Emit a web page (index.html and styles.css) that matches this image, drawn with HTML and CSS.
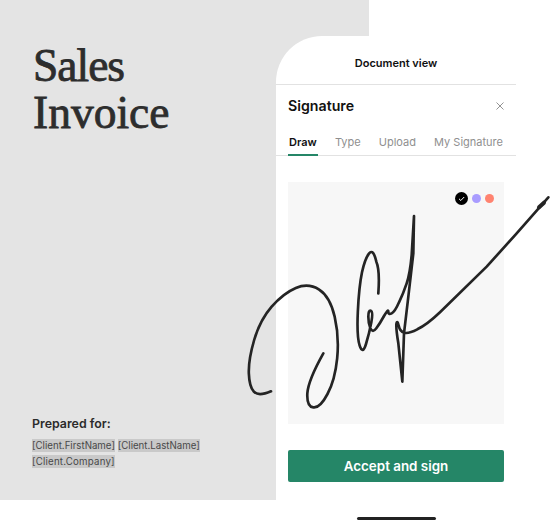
FILE: index.html
```html
<!DOCTYPE html>
<html lang="en">
<head>
<meta charset="utf-8">
<title>Sales Invoice</title>
<link rel="stylesheet" href="styles.css">
</head>
<body>
<main class="stage">
  <section class="sheet">
    <h1 class="title"><span class="title-first">Sales</span><br>Invoice</h1>
    <div class="prepared">
      <h2 class="prepared-label">Prepared for:</h2>
      <p class="tokens"><span class="token">[Client.FirstName]</span> <span class="token">[Client.LastName]</span><br><span class="token token-wide">[Client.Company]</span></p>
    </div>
  </section>

  <section class="phone">
    <header class="phone-head">Document view</header>
    <div class="sig-head">
      <h2 class="sig-title">Signature</h2>
      <svg class="close" viewBox="0 0 8 8" aria-hidden="true"><path d="M.5.5l7 7M7.5.5l-7 7"/></svg>
    </div>
    <nav class="tabs">
      <span class="tab tab-active">Draw</span>
      <span class="tab">Type</span>
      <span class="tab">Upload</span>
      <span class="tab">My Signature</span>
    </nav>
    <div class="canvas">
      <div class="swatches">
        <span class="swatch swatch-black">
          <svg viewBox="0 0 13 13" aria-hidden="true"><path d="M4 6.8l1.8 1.7L9.2 5"/></svg>
        </span>
        <span class="swatch swatch-purple"></span>
        <span class="swatch swatch-coral"></span>
      </div>
    </div>
    <button class="accept">Accept and sign</button>
    <div class="home-bar"></div>
  </section>

  <svg class="signature" viewBox="0 0 930 690" aria-hidden="true">
    <path d="M93 604 Q55 620 41.5 605 Q28 590 26.5 550 Q25 510 42.5 450 Q60 390 95 350 Q130 310 167.5 294 Q205 278 237.5 299 Q270 320 284 380 Q298 440 291.5 505 Q285 570 262.5 612 Q240 655 220 652 Q200 650 202 610 Q205 570 250 490"/>
    <path d="M415 310 Q420 240 409 215 Q400 175 387.5 190 Q375 205 366 247 Q357 290 353.5 365 Q350 440 359 467 Q368 495 378 462 Q388 430 394 397 Q400 365 392.5 362 Q385 360 385 380 Q385 400 391 415 Q398 430 409 415 Q420 400 432 378 Q445 355 445 365 Q445 375 455 370 Q465 365 477 337 Q490 310 500 280 Q510 250 515 195 L522 78 L520 190 L505 320 L492 430 L487 575 L475 460 Q467 410 469.5 400 Q472 390 476 407 Q480 425 492 428 Q505 432 532 418 Q560 405 600 367 L740 230 L830 130 L925 22"/>
    <path class="tip" d="M897 52 L912 38"/>
  </svg>
</main>
</body>
</html>
```
FILE: styles.css
```css
* { box-sizing: border-box; }
html, body { margin: 0; padding: 0; background: #fff; }
.stage {
  position: relative;
  width: 550px;
  height: 532px;
  overflow: hidden;
  background: #fff;
  font-family: Inter, "Liberation Sans", sans-serif;
}
.sheet {
  width: 369px;
  height: 500px;
  padding: 42px 33px 30px 33px;
  background: #e4e4e4;
  display: flex;
  flex-direction: column;
  justify-content: space-between;
}
.title {
  margin: 0;
  font-family: "Liberation Serif", serif;
  font-size: 45.5px;
  line-height: 47px;
  font-weight: 400;
  color: #2d2d2d;
  -webkit-text-stroke: .8px #2d2d2d;
}
.title-first { letter-spacing: -1px; }
.prepared { width: 210px; margin-left: -1px; }
.prepared-label {
  margin: 0 0 6px;
  font-size: 12.4px;
  line-height: 16px;
  font-weight: 600;
  color: #2b2b2b;
}
.tokens {
  margin: 0;
  font-size: 9.7px;
  line-height: 16px;
  color: #484848;
}
.token { background: #c9c9c9; padding: 1px 0; }
.token-wide { letter-spacing: .2px; }

.phone {
  position: absolute;
  left: 276px;
  top: 36px;
  width: 240px;
  height: 496px;
  background: #fff;
  border-top-left-radius: 46px;
  display: flex;
  flex-direction: column;
}
.phone-head {
  height: 49px;
  padding-top: 21px;
  text-align: center;
  font-size: 11px;
  line-height: 13px;
  font-weight: 600;
  color: #111;
  border-bottom: 1px solid #e2e2e2;
}
.sig-head {
  height: 42px;
  padding: 0 12px;
  display: flex;
  align-items: center;
  justify-content: space-between;
}
.sig-title {
  margin: 0;
  font-size: 14.2px;
  line-height: 16px;
  font-weight: 600;
  color: #111;
}
.close { width: 8px; height: 8px; fill: none; stroke: #777; stroke-width: .8; }
.tabs {
  height: 29px;
  padding: 0 12px;
  display: flex;
  justify-content: space-between;
  border-bottom: 1px solid #e2e2e2;
}
.tab {
  padding: 8px 1px 0;
  font-size: 11px;
  line-height: 14px;
  color: #8f8f8f;
}
.tab-active {
  height: 29px;
  border-bottom: 2px solid #258667;
  color: #111;
  font-weight: 600;
}
.canvas {
  margin: 26px 12px 0;
  height: 242px;
  background: #f7f7f7;
  display: flex;
  justify-content: flex-end;
  align-items: flex-start;
  padding: 10px 10px 0 0;
}
.swatches { display: flex; align-items: center; gap: 4px; }
.swatch { display: block; width: 9px; height: 9px; border-radius: 50%; }
.swatch-black { width: 13px; height: 13px; background: #000; }
.swatch-black svg { display: block; width: 13px; height: 13px; fill: none; stroke: #fff; stroke-width: 1; }
.swatch-purple { background: #a99cff; }
.swatch-coral { background: #ff8370; }
.accept {
  margin: 26px 12px 0;
  height: 32px;
  border: 0;
  border-radius: 2px;
  background: #258667;
  color: #fff;
  font-family: inherit;
  font-size: 13.4px;
  font-weight: 600;
}
.home-bar {
  width: 79px;
  height: 3px;
  margin: 35px 0 0 81px;
  border-radius: 2px;
  background: #222;
}
.signature {
  position: absolute;
  left: 240px;
  top: 190px;
  width: 310px;
  height: 230px;
  fill: none;
  stroke: #242424;
  stroke-width: 8;
  stroke-linecap: round;
  stroke-linejoin: round;
}
.tip { stroke-width: 12; }
```
